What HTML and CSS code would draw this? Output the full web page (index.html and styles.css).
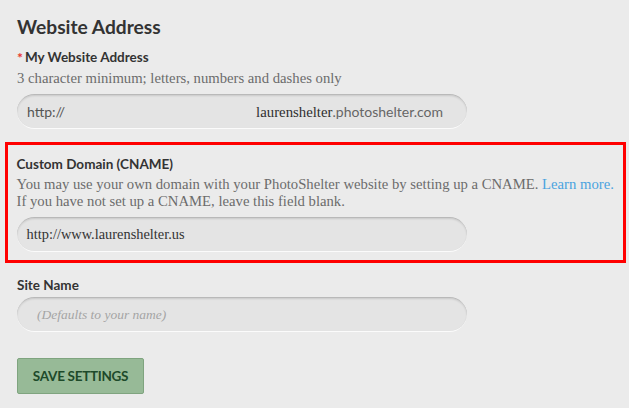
FILE: index.html
```html
<!DOCTYPE html>
<html>
<head>
<meta charset="utf-8">
<link rel="stylesheet" href="styles.css">
</head>
<body>
<div class="page">
  <h1 class="title">Website Address</h1>

  <div class="field">
    <div class="label"><span class="req">*</span>My Website Address</div>
    <div class="help">3 character minimum; letters, numbers and dashes only</div>
    <div class="input url">
      <span class="prefix">http://</span>
      <span class="domain"><span class="sub">laurenshelter</span><span class="suffix">.photoshelter.com</span></span>
    </div>
  </div>

  <div class="field highlight">
    <div class="label">Custom Domain (CNAME)</div>
    <div class="help">You may use your own domain with your PhotoShelter website by setting up a CNAME. <a class="link">Learn more.</a><br>If you have not set up a CNAME, leave this field blank.</div>
    <div class="input"><span class="value">http://www.laurenshelter.us</span></div>
  </div>

  <div class="field">
    <div class="label">Site Name</div>
    <div class="input"><span class="placeholder">(Defaults to your name)</span></div>
  </div>

  <button class="save">SAVE SETTINGS</button>
</div>
</body>
</html>
```
FILE: styles.css
```css
html, body {
  margin: 0;
  padding: 0;
  background: #ebebeb;
}
.page {
  padding: 15px 0 0 17px;
  width: 609px;
}
.title {
  font-family: Lato, "Noto Sans", sans-serif;
  font-weight: 700;
  font-size: 19.2px;
  line-height: 24px;
  color: #333;
  margin: 0 0 9px 0;
}
.field {
  margin-bottom: 14px;
}
.label {
  font-family: Lato, "Noto Sans", sans-serif;
  font-weight: 700;
  font-size: 13.5px;
  line-height: 18px;
  color: #333;
}
.req {
  color: #e8362e;
  font-size: 14px;
  margin-right: 2px;
  position: relative;
  top: 1px;
}
.help {
  font-family: "Liberation Serif", "DejaVu Serif", serif;
  font-size: 14.7px;
  line-height: 17px;
  color: #6c6c6c;
  margin-top: 3px;
}
.field:first-of-type .help {
  margin-top: 4px;
}
.link {
  color: #4aa3df;
}
.input {
  margin-top: 7px;
  width: 450px;
  height: 35px;
  box-sizing: border-box;
  border-radius: 18px;
  background: #e4e4e4;
  border-top: 1px solid #b9b9b9;
  border-bottom: 1px solid #fbfbfb;
  box-shadow: inset 0 1px 2px rgba(0,0,0,0.12);
  display: flex;
  align-items: center;
  padding: 0 10px;
  font-size: 14px;
}
.label + .input {
  margin-top: 3px;
}
.url {
  justify-content: space-between;
  padding-right: 24px;
}
.prefix {
  font-family: Lato, "Noto Sans", sans-serif;
  color: #555;
}
.sub {
  font-family: "Liberation Serif", serif;
  font-size: 14.8px;
  color: #2f2f2f;
}
.suffix {
  font-family: Lato, "Noto Sans", sans-serif;
  color: #666;
}
.value {
  font-family: "Liberation Serif", serif;
  font-size: 14.4px;
  color: #333;
}
.placeholder {
  font-family: "Liberation Serif", serif;
  font-style: italic;
  font-size: 13.5px;
  color: #a5a5a5;
  padding-left: 10px;
}
.field:first-of-type {
  margin-bottom: 13px;
}
.highlight {
  box-sizing: border-box;
  margin-left: -12px;
  width: 621px;
  border: 3.5px solid #ff0000;
  padding: 10px 0 8px 8.5px;
  margin-bottom: 13px;
}
.save {
  margin-top: 12px;
  width: 127px;
  height: 36px;
  background: #97ba97;
  border: 1px solid #7fa47f;
  border-radius: 2px;
  font-family: Lato, "Noto Sans", sans-serif;
  font-weight: 700;
  font-size: 13.5px;
  color: #1d4a2a;
  letter-spacing: -0.3px;
  padding: 0;
}
```
